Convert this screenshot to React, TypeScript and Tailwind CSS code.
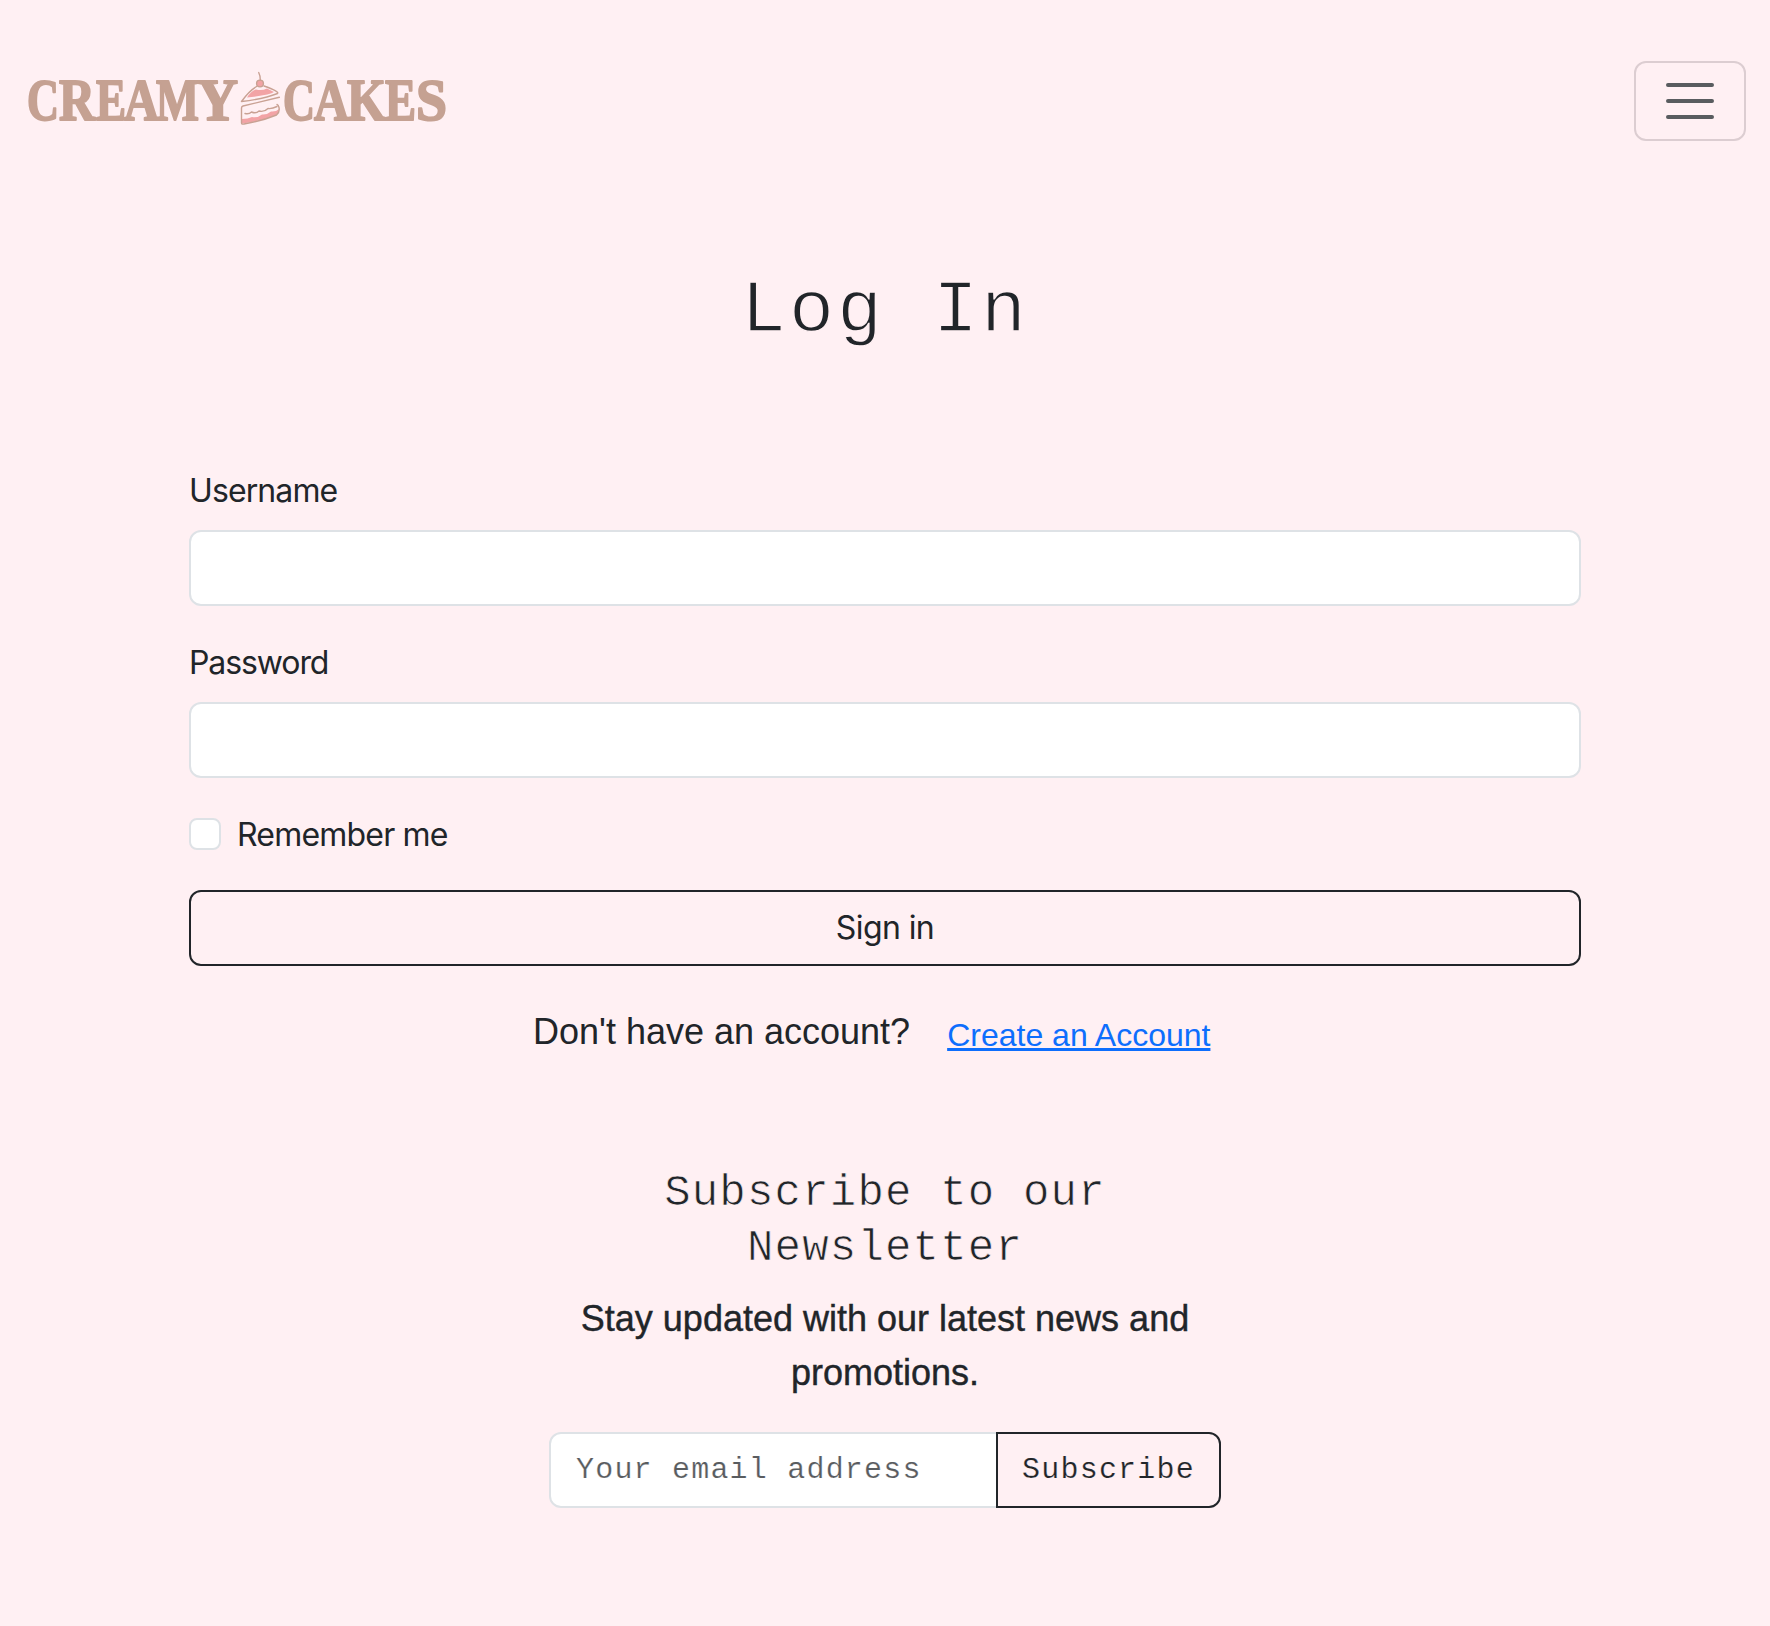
import React from 'react';

type Glyph = { ch: string; x: number; w: number };

const glyphs: Glyph[] = [
  { ch: 'C', x: 27, w: 32 },
  { ch: 'R', x: 59, w: 36 },
  { ch: 'E', x: 96, w: 30 },
  { ch: 'A', x: 124, w: 35 },
  { ch: 'M', x: 156, w: 43 },
  { ch: 'Y', x: 197, w: 41 },
  { ch: 'C', x: 283, w: 32 },
  { ch: 'A', x: 314, w: 35 },
  { ch: 'K', x: 347, w: 39 },
  { ch: 'E', x: 385, w: 31 },
  { ch: 'S', x: 416, w: 31 },
];

function Logo() {
  return (
    <svg className="h-[80px] w-[426px] overflow-visible" viewBox="24 56 426 80" role="img" aria-label="Creamy Cakes">
      <g
        fontFamily='"Liberation Serif", serif'
        fontWeight="700"
        fontSize="59"
        fill="#c5a192"
        stroke="#c5a192"
        strokeWidth="2"
        strokeLinejoin="round"
      >
        {glyphs.map((g) => (
          <text key={g.x} x={g.x} y={119.5} textLength={g.w} lengthAdjust="spacingAndGlyphs">
            {g.ch}
          </text>
        ))}
      </g>
      <g strokeLinecap="round" strokeLinejoin="round" fill="none" stroke="#c9a193" strokeWidth="1.4">
        <path d="M247 97.5 Q251 91 256 89.500 Q262 91 267 88.500 L274 92 Q270 95 247 97.500Z" fill="#f2a3a5" stroke="none" />
        <path d="M242 119 Q248 119 252 117 Q258 118 262 114.500 Q267 115 271 111.500 Q276 112 279 109 Q279 113 276 115 Q262 121 242 123.500Z" fill="#f2a3a5" stroke="none" />
        <path d="M256.500 86.500 Q249 91 241.500 101.500 Q264 99 277.500 93.500 Q279.500 91.500 264 86" />
        <circle cx="260" cy="83.500" r="3.400" fill="#f2a3a5" />
        <path d="M260.300 80 Q260.500 76 258.700 72.500" />
        <path d="M279.300 97.300 L243 106 Q241.500 106.500 241.500 108 V123 Q241.500 124.500 244 124 Q262 121 276.500 115 Q280 112 279 107.500 Q278.500 105 277 104.500" />
        <path d="M245 113.500 Q249 114.500 251.500 112 Q256 114 259 111 Q264 112.500 268 108.500 Q272 109 277 106.500" />
      </g>
    </svg>
  );
}

export default function App() {
  return (
    <div className="flex h-[1626px] w-[1770px] flex-col bg-[#fff0f3] font-['Liberation_Sans',sans-serif] text-[32px] leading-[48px] text-[#212529]">
      <nav className="flex h-[202px] items-center justify-between pr-6 pl-6">
        <a href="#" className="mb-[10px]"><Logo /></a>
        <button aria-label="Menu" className="flex h-20 w-28 items-center justify-center rounded-xl border-2 border-[#dccdd1]">
          <svg className="size-[60px]" viewBox="0 0 30 30" stroke="#595c5f" strokeWidth="2" strokeLinecap="round">
            <path d="M4 7h22M4 15h22M4 23h22" />
          </svg>
        </button>
      </nav>
      <h1 className="mt-[62px] h-24 text-center font-['Liberation_Mono',monospace] text-[75px] leading-[96px] tracking-[3px] [-webkit-text-stroke:1.4px_#fff0f3]">Log In</h1>
      <form className="mx-[189px] mt-[106px] flex flex-col font-[Inter,sans-serif]">
        <label className="mb-4 h-12 pt-px tracking-[-0.9px]">Username</label>
        <input className="h-[76px] rounded-xl border-2 border-[#dee2e6] bg-white px-6" />
        <label className="mt-8 mb-4 h-12 pt-px tracking-[-1.1px]">Password</label>
        <input type="password" className="h-[76px] rounded-xl border-2 border-[#dee2e6] bg-white px-6" />
        <label className="mt-8 flex h-12 items-center gap-4 tracking-[-0.8px]">
          <input type="checkbox" className="size-8 appearance-none rounded-lg border-2 border-[#dee2e6] bg-white" />
          <span className="pt-px">Remember me</span>
        </label>
        <button className="mt-8 h-[76px] rounded-xl border-2 border-[#212529] tracking-[-0.6px]">Sign in</button>
      </form>
      <div className="mt-[39px] ml-[533px] flex items-baseline">
        <span className="text-[36px] leading-[54px]">Don't have an account?</span>
        <a href="#" className="relative top-[2px] ml-[37px] text-[#0d6efd] underline">Create an Account</a>
      </div>
      <section className="mx-auto mt-[107px] flex w-[672px] flex-col text-center">
        <h2 className="font-['Liberation_Mono',monospace] text-[44px] leading-[55px] tracking-[1.2px] [-webkit-text-stroke:0.7px_#fff0f3]">Subscribe to our<br />Newsletter</h2>
        <p className="mt-4 text-[36px] leading-[54px] [-webkit-text-stroke:0.4px_#212529]">Stay updated with our latest news and promotions.</p>
        <div className="mt-8 flex font-['Liberation_Mono',monospace] text-[30px] tracking-[1.2px]">
          <input placeholder="Your email address" className="h-[76px] w-[449px] rounded-l-xl border-2 border-[#dee2e6] bg-white px-[25px] placeholder:text-[#595c5f] [-webkit-text-stroke:0.2px_#ffffff]" />
          <button className="-ml-[2px] h-[76px] w-[225px] rounded-r-xl border-2 border-[#212529] [-webkit-text-stroke:0.2px_#fff0f3]">Subscribe</button>
        </div>
      </section>
    </div>
  );
}
